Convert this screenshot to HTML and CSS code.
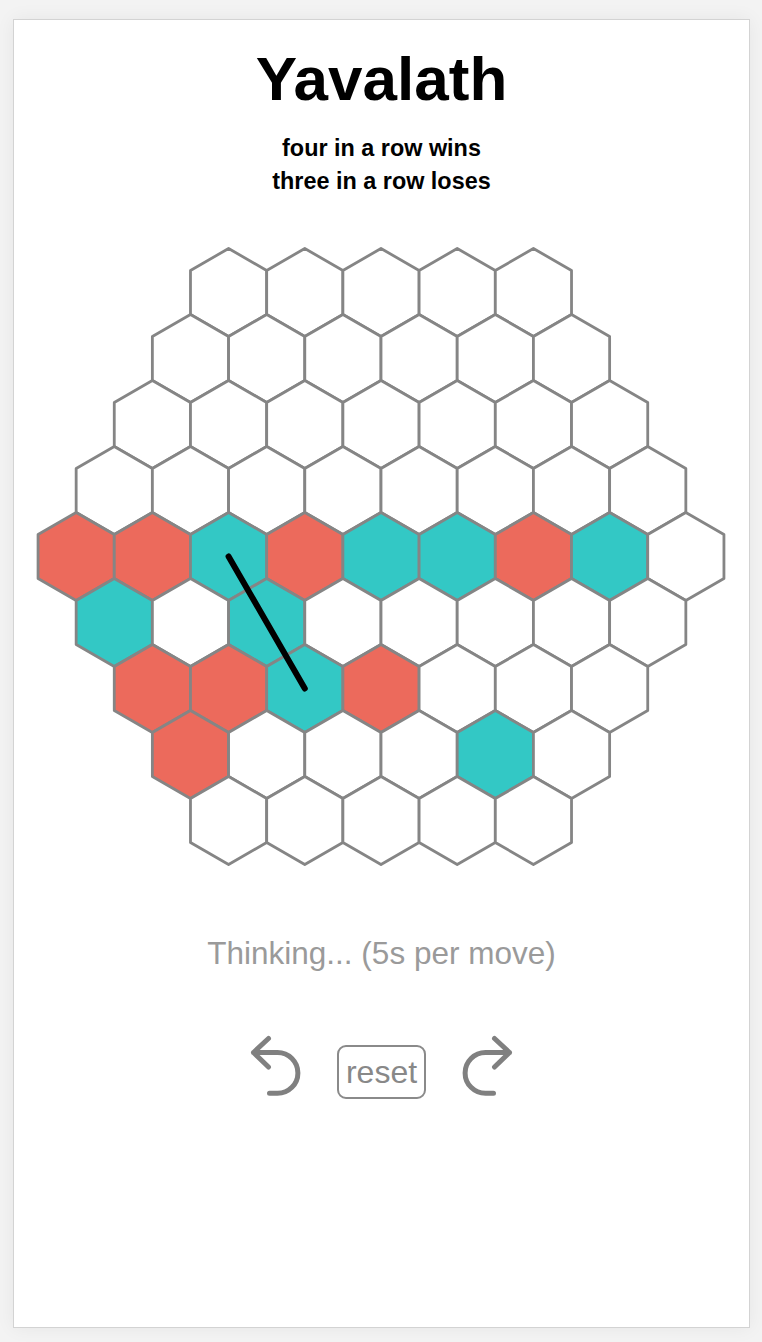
FILE: index.html
```html
<!DOCTYPE html>
<html>
<head>
<meta charset="utf-8">
<link rel="stylesheet" href="styles.css">
</head>
<body>
<main class="card">
  <h1 class="title">Yavalath</h1>
  <div class="rules">
    <div>four in a row wins</div>
    <div>three in a row loses</div>
  </div>
  <svg class="board" width="735" height="640" viewBox="0 0 735 640">
    <defs>
      <polygon id="h" points="0,-44 38.105,-22 38.105,22 0,44 -38.105,22 -38.105,-22"/>
    </defs>
    <g class="cells">
      <!-- row 0 -->
      <use href="#h" x="214.58" y="52.5"/>
      <use href="#h" x="290.79" y="52.5"/>
      <use href="#h" x="367" y="52.5"/>
      <use href="#h" x="443.21" y="52.5"/>
      <use href="#h" x="519.42" y="52.5"/>
      <!-- row 1 -->
      <use href="#h" x="176.475" y="118.5"/>
      <use href="#h" x="252.685" y="118.5"/>
      <use href="#h" x="328.895" y="118.5"/>
      <use href="#h" x="405.105" y="118.5"/>
      <use href="#h" x="481.315" y="118.5"/>
      <use href="#h" x="557.525" y="118.5"/>
      <!-- row 2 -->
      <use href="#h" x="138.37" y="184.5"/>
      <use href="#h" x="214.58" y="184.5"/>
      <use href="#h" x="290.79" y="184.5"/>
      <use href="#h" x="367" y="184.5"/>
      <use href="#h" x="443.21" y="184.5"/>
      <use href="#h" x="519.42" y="184.5"/>
      <use href="#h" x="595.63" y="184.5"/>
      <!-- row 3 -->
      <use href="#h" x="100.265" y="250.5"/>
      <use href="#h" x="176.475" y="250.5"/>
      <use href="#h" x="252.685" y="250.5"/>
      <use href="#h" x="328.895" y="250.5"/>
      <use href="#h" x="405.105" y="250.5"/>
      <use href="#h" x="481.315" y="250.5"/>
      <use href="#h" x="557.525" y="250.5"/>
      <use href="#h" x="633.735" y="250.5"/>
      <!-- row 4 -->
      <use href="#h" class="red" x="62.16" y="316.5"/>
      <use href="#h" class="red" x="138.37" y="316.5"/>
      <use href="#h" class="teal" x="214.58" y="316.5"/>
      <use href="#h" class="red" x="290.79" y="316.5"/>
      <use href="#h" class="teal" x="367" y="316.5"/>
      <use href="#h" class="teal" x="443.21" y="316.5"/>
      <use href="#h" class="red" x="519.42" y="316.5"/>
      <use href="#h" class="teal" x="595.63" y="316.5"/>
      <use href="#h" x="671.84" y="316.5"/>
      <!-- row 5 -->
      <use href="#h" class="teal" x="100.265" y="382.5"/>
      <use href="#h" x="176.475" y="382.5"/>
      <use href="#h" class="teal" x="252.685" y="382.5"/>
      <use href="#h" x="328.895" y="382.5"/>
      <use href="#h" x="405.105" y="382.5"/>
      <use href="#h" x="481.315" y="382.5"/>
      <use href="#h" x="557.525" y="382.5"/>
      <use href="#h" x="633.735" y="382.5"/>
      <!-- row 6 -->
      <use href="#h" class="red" x="138.37" y="448.5"/>
      <use href="#h" class="red" x="214.58" y="448.5"/>
      <use href="#h" class="teal" x="290.79" y="448.5"/>
      <use href="#h" class="red" x="367" y="448.5"/>
      <use href="#h" x="443.21" y="448.5"/>
      <use href="#h" x="519.42" y="448.5"/>
      <use href="#h" x="595.63" y="448.5"/>
      <!-- row 7 -->
      <use href="#h" class="red" x="176.475" y="514.5"/>
      <use href="#h" x="252.685" y="514.5"/>
      <use href="#h" x="328.895" y="514.5"/>
      <use href="#h" x="405.105" y="514.5"/>
      <use href="#h" class="teal" x="481.315" y="514.5"/>
      <use href="#h" x="557.525" y="514.5"/>
      <!-- row 8 -->
      <use href="#h" x="214.58" y="580.5"/>
      <use href="#h" x="290.79" y="580.5"/>
      <use href="#h" x="367" y="580.5"/>
      <use href="#h" x="443.21" y="580.5"/>
      <use href="#h" x="519.42" y="580.5"/>
    </g>
    <line class="loss-line" x1="214.58" y1="316.5" x2="290.79" y2="448.5"/>
  </svg>
  <div class="status">Thinking... (5s per move)</div>
  <div class="controls">
    <svg class="icon" width="56" height="62" viewBox="0 0 56 62">
      <path d="M20.5 3.5 L5.5 17.5 L20.5 32 M5.5 17.5 H29.5 A20.4 20.4 0 0 1 29.5 58.3 H21.5"/>
    </svg>
    <button class="reset">reset</button>
    <svg class="icon" width="56" height="62" viewBox="0 0 56 62">
      <path d="M35.5 3.5 L50.5 17.5 L35.5 32 M50.5 17.5 H26.5 A20.4 20.4 0 0 0 26.5 58.3 H34.5"/>
    </svg>
  </div>
</main>
</body>
</html>
```
FILE: styles.css
```css
html, body {
  margin: 0;
  padding: 0;
}
body {
  background: #f3f3f3;
  padding: 19px 0 0 13px;
  height: 1342px;
  box-sizing: border-box;
  font-family: "Liberation Sans", Arial, sans-serif;
}
.card {
  width: 737px;
  height: 1309px;
  box-sizing: border-box;
  background: #ffffff;
  border: 1px solid #d3d3d3;
  box-shadow: 0 0 18px rgba(0, 0, 0, 0.06);
  display: flex;
  flex-direction: column;
  align-items: center;
}
.title {
  margin: 24px 0 0;
  font-size: 62px;
  line-height: 70px;
  font-weight: bold;
  color: #000;
}
.rules {
  margin-top: 18px;
  font-size: 23.4px;
  line-height: 33px;
  font-weight: bold;
  color: #000;
  text-align: center;
}
.board {
  display: block;
  margin-top: 42px;
}
.cells {
  fill: #ffffff;
  stroke: #858585;
  stroke-width: 2.8;
  stroke-linejoin: round;
}
.cells .red {
  fill: #ec6a5c;
}
.cells .teal {
  fill: #33c8c5;
}
.loss-line {
  stroke: #000;
  stroke-width: 6;
  stroke-linecap: round;
}
.status {
  margin-top: 56px;
  font-size: 31.5px;
  line-height: 34px;
  color: #9a9a9a;
}
.controls {
  margin-top: 65px;
  display: flex;
  align-items: flex-start;
  gap: 33px;
}
.icon {
  display: block;
  fill: none;
  stroke: #808080;
  stroke-width: 5;
  stroke-linecap: round;
  stroke-linejoin: round;
}
.reset {
  margin-top: 10px;
  width: 89px;
  height: 54px;
  box-sizing: border-box;
  border: 2px solid #8a8a8a;
  border-radius: 9px;
  background: #fff;
  padding: 0;
  font-family: "Liberation Sans", Arial, sans-serif;
  font-size: 32px;
  color: #888888;
}
```
